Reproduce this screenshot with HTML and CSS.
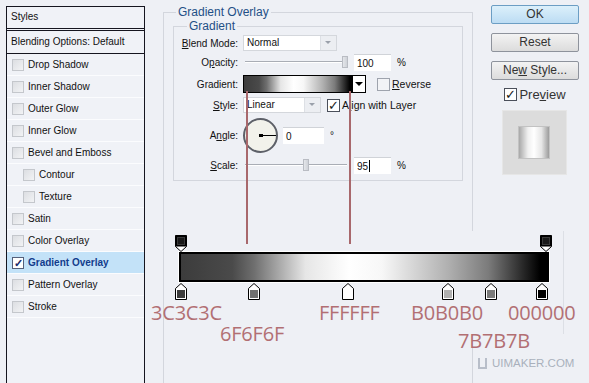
FILE: index.html
```html
<!DOCTYPE html>
<html>
<head>
    <meta charset="UTF-8">
    <title>Layer Style</title>
    <link rel="stylesheet" href="styles.css">
</head>
<body>
<div class="dialog">
    <div class="styles">
        <div class="styles-head">Styles</div>
        <div class="styles-blend">Blending Options: Default</div>
        <ul class="styles-list">
            <li><span class="chk"></span>Drop Shadow</li>
            <li><span class="chk"></span>Inner Shadow</li>
            <li><span class="chk"></span>Outer Glow</li>
            <li><span class="chk"></span>Inner Glow</li>
            <li><span class="chk"></span>Bevel and Emboss</li>
            <li class="sub"><span class="chk"></span>Contour</li>
            <li class="sub"><span class="chk"></span>Texture</li>
            <li><span class="chk"></span>Satin</li>
            <li><span class="chk"></span>Color Overlay</li>
            <li class="on"><span class="chk">&#10003;</span>Gradient Overlay</li>
            <li><span class="chk"></span>Pattern Overlay</li>
            <li><span class="chk"></span>Stroke</li>
        </ul>
    </div>

    <div class="main">
        <fieldset class="group">
            <legend>Gradient Overlay</legend>
            <fieldset class="inner">
                <legend>Gradient</legend>

                <div class="row r-blend">
                    <label><u>B</u>lend Mode:</label>
                    <div class="select w-blend"><span>Normal</span><i></i></div>
                </div>
                <div class="row r-opacity">
                    <label>O<u>p</u>acity:</label>
                    <div class="slider"><b style="left: 97px"></b></div>
                    <div class="num">100</div>
                    <span class="unit">%</span>
                </div>
                <div class="row r-gradient">
                    <label>Gradient:</label>
                    <div class="swatch"></div>
                    <div class="swatch-arrow"><i></i></div>
                    <span class="box"></span>
                    <span class="opt"><u>R</u>everse</span>
                </div>
                <div class="row r-style">
                    <label><u>S</u>tyle:</label>
                    <div class="select w-style"><span>Linear</span><i></i></div>
                    <span class="box on">&#10003;</span>
                    <span class="opt">A<u>l</u>ign with Layer</span>
                </div>
                <div class="row r-angle">
                    <label>A<u>n</u>gle:</label>
                    <div class="dial"><i></i><b></b></div>
                    <div class="num w-angle">0</div>
                    <span class="unit">&deg;</span>
                </div>
                <div class="row r-scale">
                    <label><u>S</u>cale:</label>
                    <div class="slider"><b style="left: 58px"></b></div>
                    <div class="num">95<em></em></div>
                    <span class="unit">%</span>
                </div>
            </fieldset>

            <div class="editor">
                <div class="stops top">
                    <svg class="stop" style="left: 2px" width="12" height="17" viewBox="0 0 12 17"><path d="M0.5 0.5H11.5V11.5L6 16.5L0.5 11.5Z" fill="#fff" stroke="#000"/><rect x="0.5" y="0.5" width="11" height="11" fill="#000"/><rect x="2.5" y="2.5" width="7" height="7" fill="#1a1a1a" stroke="#3a3a3a"/></svg>
                    <svg class="stop" style="left: 367px" width="12" height="17" viewBox="0 0 12 17"><path d="M0.5 0.5H11.5V11.5L6 16.5L0.5 11.5Z" fill="#fff" stroke="#000"/><rect x="0.5" y="0.5" width="11" height="11" fill="#000"/><rect x="2.5" y="2.5" width="7" height="7" fill="#1a1a1a" stroke="#3a3a3a"/></svg>
                </div>
                <div class="bar"></div>
                <div class="stops bottom">
                    <svg class="stop" style="left: 2px" width="12" height="17" viewBox="0 0 12 17"><path d="M6 0.5L11.5 5.5V16.5H0.5V5.5Z" fill="#fff" stroke="#000"/><rect x="2" y="7" width="8" height="8" fill="#3c3c3c"/></svg>
                    <svg class="stop" style="left: 75px" width="12" height="17" viewBox="0 0 12 17"><path d="M6 0.5L11.5 5.5V16.5H0.5V5.5Z" fill="#fff" stroke="#000"/><rect x="2" y="7" width="8" height="8" fill="#6f6f6f"/></svg>
                    <svg class="stop" style="left: 169px" width="12" height="17" viewBox="0 0 12 17"><path d="M6 0.5L11.5 5.5V16.5H0.5V5.5Z" fill="#fff" stroke="#000"/><rect x="2" y="7" width="8" height="8" fill="#fff"/></svg>
                    <svg class="stop" style="left: 269px" width="12" height="17" viewBox="0 0 12 17"><path d="M6 0.5L11.5 5.5V16.5H0.5V5.5Z" fill="#fff" stroke="#000"/><rect x="2" y="7" width="8" height="8" fill="#b0b0b0"/></svg>
                    <svg class="stop" style="left: 312px" width="12" height="17" viewBox="0 0 12 17"><path d="M6 0.5L11.5 5.5V16.5H0.5V5.5Z" fill="#fff" stroke="#000"/><rect x="2" y="7" width="8" height="8" fill="#7b7b7b"/></svg>
                    <svg class="stop" style="left: 363px" width="12" height="17" viewBox="0 0 12 17"><path d="M6 0.5L11.5 5.5V16.5H0.5V5.5Z" fill="#fff" stroke="#000"/><rect x="2" y="7" width="8" height="8" fill="#000"/></svg>
                </div>
                <span class="note" style="left: -21px; top: 70px">3C3C3C</span>
                <span class="note" style="left: 48px; top: 91px">6F6F6F</span>
                <span class="note" style="left: 147px; top: 70px">FFFFFF</span>
                <span class="note" style="left: 239px; top: 70px">B0B0B0</span>
                <span class="note" style="left: 336px; top: 70px">000000</span>
                <span class="note" style="left: 286px; top: 98px">7B7B7B</span>
            </div>
        </fieldset>

        <span class="guide" style="left: 83px"></span>
        <span class="guide" style="left: 186px"></span>
    </div>

    <div class="side">
        <div class="btn ok">OK</div>
        <div class="btn">Reset</div>
        <div class="btn">Ne<u>w</u> Style...</div>
        <div class="preview-chk"><span class="box on">&#10003;</span>Pre<u>v</u>iew</div>
        <div class="preview"><div class="preview-shape"></div></div>
    </div>
</div>

<div class="mark"><i></i>UIMAKER.COM</div>
</body>
</html>
```

FILE: styles.css
```css
* {
    margin: 0;
    padding: 0;
    box-sizing: border-box;
}

html, body {
    height: 100%;
    overflow: hidden;
}

body {
    background: #eef0f5;
    font-family: "Liberation Sans", Arial, sans-serif;
    font-size: 10px;
    color: #111;
}

ul, li {
    list-style: none;
}

u {
    text-decoration: underline;
}

.dialog {
    display: flex;
    align-items: flex-start;
    padding: 6px 0 0 6px;
}

/* left styles list */
.styles {
    width: 139px;
    height: 400px;
    border: 1px solid #15151f;
    background: #f0f2f7;
}

.styles-head {
    height: 24px;
    line-height: 20px;
    padding-left: 4px;
    border-bottom: 3px double #15151f;
}

.styles-blend {
    height: 23px;
    line-height: 22px;
    padding-left: 4px;
    border-bottom: 1px solid #15151f;
}

.styles-list li {
    display: flex;
    align-items: center;
    height: 22px;
    padding-left: 5px;
    border-bottom: 1px solid #fbfcfe;
}

.styles-list li.sub {
    padding-left: 16px;
}

.styles-list li.on {
    background: #c3e2f8;
    color: #123c8c;
    font-weight: bold;
}

.chk {
    width: 12px;
    height: 12px;
    margin-right: 4px;
    border: 1px solid #c4c7cc;
    background: linear-gradient(135deg, #dcdee2, #f2f3f5);
    font-size: 11px;
    line-height: 10px;
    text-align: center;
    color: #1c2a6a;
}

.styles-list li.on .chk {
    border-color: #55607a;
    background: #fff;
}

/* middle panel */
.main {
    position: relative;
    margin: -1px 0 0 18px;
}

fieldset {
    border: 1px solid #d3d6dd;
    min-width: 0;
}

legend {
    font-size: 12px;
    line-height: 14px;
    color: #1f4f86;
    padding: 0 2px;
}

.group {
    width: 310px;
    height: 420px;
}

.group > legend {
    margin-left: 12px;
}

.inner {
    width: 290px;
    margin-left: 9px;
    padding-bottom: 7px;
}

.inner > legend {
    margin-left: 13px;
}

.row {
    display: flex;
    align-items: center;
}

.row label {
    width: 64px;
    margin-right: 5px;
    text-align: right;
}

.r-blend { height: 20px; }
.r-opacity { height: 18px; }
.r-gradient { height: 26px; }
.r-style { height: 16px; }
.r-angle { height: 44px; }
.r-scale { height: 16px; }

.select {
    display: flex;
    height: 16px;
    background: #fff;
    border: 1px solid #d4d7dc;
}

.select span {
    flex: 1;
    padding-left: 3px;
    line-height: 14px;
}

.select i {
    position: relative;
    width: 16px;
    background: #eceef2;
    border-left: 1px solid #dde0e5;
}

.select i:after {
    content: "";
    position: absolute;
    left: 4px;
    top: 5px;
    border: 3px solid transparent;
    border-top: 3px solid #9aa0aa;
    border-bottom: 0;
    width: 0;
}

.w-blend { width: 94px; }
.w-style { width: 78px; }

.slider {
    position: relative;
    width: 102px;
    height: 14px;
    margin-left: 2px;
}

.slider:before {
    content: "";
    position: absolute;
    left: 0;
    right: 0;
    top: 6px;
    border-top: 1px solid #a9adb5;
    border-bottom: 1px solid #fff;
}

.slider b {
    position: absolute;
    top: 1px;
    width: 6px;
    height: 12px;
    background: linear-gradient(90deg, #e4e6ea, #cfd2d8);
    border: 1px solid #b9bcc3;
}

.num {
    width: 37px;
    height: 17px;
    margin-left: 7px;
    padding-left: 3px;
    line-height: 17px;
    background: #fff;
    border-top: 1px solid #d0d3d8;
}

.num em {
    display: inline-block;
    width: 1px;
    height: 12px;
    margin-left: 1px;
    vertical-align: -2px;
    background: #000;
}

.unit {
    margin-left: 6px;
}

.w-angle {
    width: 41px;
    margin-left: 5px;
}

.swatch {
    width: 110px;
    height: 18px;
    border: 1px solid #000;
    background: linear-gradient(90deg, #3c3c3c, #4a4a4a 14%, #6f6f6f 21%, #e6e6e6 34%, #fff 46%, #f7f7f7 55%, #b0b0b0 73%, #7b7b7b 84%, #000 98%);
}

.swatch-arrow {
    position: relative;
    width: 13px;
    height: 18px;
    border: 1px solid #000;
    border-left: 0;
    background: #fff;
}

.swatch-arrow i {
    position: absolute;
    left: 2px;
    top: 6px;
    border: 4px solid transparent;
    border-top: 4px solid #000;
    border-bottom: 0;
}

.box {
    width: 13px;
    height: 13px;
    margin: 0 2px 0 11px;
    border: 1px solid #9ea3ad;
    background: #f2f3f6;
    font-size: 13px;
    line-height: 11px;
    text-align: center;
    color: #1a1a1a;
}

.box.on {
    background: #fff;
    border-color: #4a4f5a;
}

.r-style .box {
    margin-left: 6px;
}

.opt {
    font-size: 10.5px;
}

.dial {
    position: relative;
    width: 35px;
    height: 35px;
    border: 2px solid #5d6068;
    border-radius: 50%;
    background: #f2f2eb;
}

.dial i {
    position: absolute;
    left: 14px;
    top: 14px;
    width: 4px;
    height: 3px;
    background: #000;
}

.dial b {
    position: absolute;
    left: 16px;
    top: 15px;
    width: 15px;
    height: 1px;
    background: #000;
}

/* gradient editor overlay */
.editor {
    position: relative;
    width: 392px;
    height: 103px;
    margin: 50px 0 0 8px;
    padding: 4px 0 0 7px;
    background: #eef0f5;
    border-right: 1px solid #dcdfe5;
}

.stops {
    position: relative;
    height: 17px;
}

.stops .stop {
    position: absolute;
    top: 0;
    margin-left: -6px;
}

.stops.bottom .stop {
    top: 1px;
}

.bar {
    width: 370px;
    height: 30px;
    border: 2px solid #000;
    box-shadow: 0 0 0 1px #fff;
    background: linear-gradient(90deg, #3c3c3c, #4a4a4a 14%, #6f6f6f 20%, #e6e6e6 34%, #fff 46%, #f7f7f7 55%, #b0b0b0 73%, #7b7b7b 84%, #000 98%);
}

.note {
    position: absolute;
    font-family: "Open Sans", "Liberation Sans", sans-serif;
    font-size: 20px;
    line-height: 24px;
    color: #b26f73;
    letter-spacing: -0.2px;
}

.guide {
    position: absolute;
    top: 86px;
    width: 2px;
    height: 153px;
    background: #a8686c;
}

/* right buttons */
.side {
    display: flex;
    flex-direction: column;
    align-items: center;
    width: 88px;
    margin: -1px 0 0 18px;
}

.btn {
    width: 88px;
    height: 19px;
    margin-bottom: 9px;
    border: 1px solid #8e939c;
    border-radius: 2px;
    background: linear-gradient(#f3f3f3, #dcdcdc);
    font-family: "Liberation Sans", Arial, sans-serif;
    font-size: 12px;
    line-height: 17px;
    text-align: center;
    color: #333;
}

.btn.ok {
    border-color: #6c9ec4;
    background: linear-gradient(#dcf0fb, #bcdcf3);
}

.preview-chk {
    display: flex;
    align-items: center;
    margin: -2px 0 0 0;
    font-size: 13px;
    color: #333;
}

.preview-chk .box {
    margin: 0 2px 0 0;
}

.preview {
    display: flex;
    align-items: center;
    justify-content: center;
    width: 65px;
    height: 65px;
    margin: 8px 0 0 -2px;
    background: #dcdcdc;
    border: 1px solid #e6e6e6;
}

.preview-shape {
    width: 32px;
    height: 33px;
    border: 1px solid #c2c2c2;
    background: linear-gradient(90deg, #a8a8a8, #f0f0f0 30%, #fff 50%, #e6e6e6 75%, #9c9c9c);
}

.mark {
    position: absolute;
    left: 478px;
    top: 357px;
    display: flex;
    align-items: center;
    font-family: "Liberation Sans", Arial, sans-serif;
    font-size: 11.5px;
    color: #a9b0bc;
}

.mark i {
    width: 9px;
    height: 11px;
    margin-right: 5px;
    border: 2px dashed #b8bec9;
    border-top: 0;
}
```
